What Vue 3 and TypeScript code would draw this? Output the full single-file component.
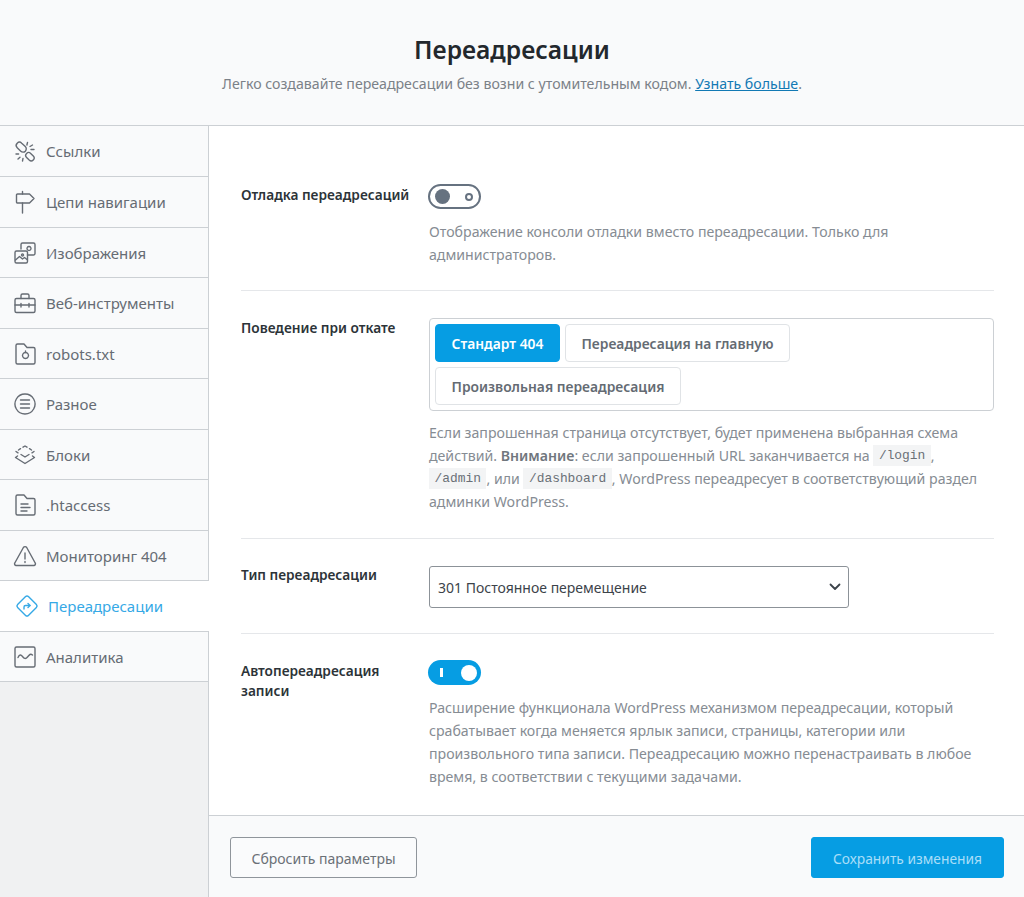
<script setup lang="ts">
interface NavItem { label: string; paths: string[] }
const items: NavItem[] = [
  { label: 'Ссылки', paths: ['M4.2 4.2a3.2 3.2 0 0 1 4.5 0l3.6 3.4a3.2 3.2 0 0 1-4.5 4.6L4.2 8.7a3.2 3.2 0 0 1 0-4.5z', 'M13.6 14.4a2.9 2.9 0 0 1 4.1 0l2.6 2.6a2.9 2.9 0 0 1-4.1 4.1l-2.6-2.6a2.9 2.9 0 0 1 0-4.1z', 'M14.5 3.5l-.6 2.5M19.5 6l-2.5 1.5M21 10.5h-3', 'M3 15h2.6M5 20l2-1.8M9.5 22l.5-2.6'] },
  { label: 'Цепи навигации', paths: ['M4.5 4h12l4.5 4.5-4.5 4.5h-12a1 1 0 0 1-1-1V5a1 1 0 0 1 1-1z', 'M9.5 1.5V4M9.5 13v10'] },
  { label: 'Изображения', paths: ['M3.5 10h9.5a1.5 1.5 0 0 1 1.5 1.5v9a1.5 1.5 0 0 1-1.5 1.5H3.5A1.5 1.5 0 0 1 2 20.5v-9A1.5 1.5 0 0 1 3.5 10z', 'M2.5 19l4-3.5 3 2.5 2-1.5 2.5 2', 'M9.5 13a1 1 0 1 0 .01 0z', 'M8 8V3.5A1.5 1.5 0 0 1 9.5 2h11A1.5 1.5 0 0 1 22 3.5v9a1.5 1.5 0 0 1-1.5 1.5h-6', 'M16 5.5a2 2 0 1 0 .01 0z'] },
  { label: 'Веб-инструменты', paths: ['M3.5 7.5h17A1.5 1.5 0 0 1 22 9v11a1.5 1.5 0 0 1-1.5 1.5h-17A1.5 1.5 0 0 1 2 20V9a1.5 1.5 0 0 1 1.5-1.5z', 'M8 7.5V4.5A1.5 1.5 0 0 1 9.5 3h5A1.5 1.5 0 0 1 16 4.5v3', 'M2 14h20M8 12.5v3.5M16 12.5v3.5'] },
  { label: 'robots.txt', paths: ['M3 3.5A1.5 1.5 0 0 1 4.5 2H11l3 3.5h6.5A1.5 1.5 0 0 1 22 7v13.5a1.5 1.5 0 0 1-1.5 1.5h-16A1.5 1.5 0 0 1 3 20.5z', 'M12.5 10.5a3 3 0 1 0 .01 0z', 'M12.5 9v1.5'] },
  { label: 'Разное', paths: ['M12 2a10 10 0 1 0 .01 0z', 'M7.5 8h9M7.5 12h9M7.5 16h9'] },
  { label: 'Блоки', paths: ['M10 4.2L12 3l2 1.2M16.5 5.7L18.5 7M21 8.5L19 9.8M5 9.8L3 8.5M5.5 7L7.5 5.7', 'M8 11.5l4 2.5 4-2.5', 'M4.5 13L2.5 14.5 12 20.5l9.5-6L19.5 13'] },
  { label: '.htaccess', paths: ['M3 3.5A1.5 1.5 0 0 1 4.5 2H11l3 3.5h6.5A1.5 1.5 0 0 1 22 7v13.5a1.5 1.5 0 0 1-1.5 1.5h-16A1.5 1.5 0 0 1 3 20.5z', 'M8 11h7M8 14.5h9M8 18h6'] },
  { label: 'Мониторинг 404', paths: ['M10.4 3.5a2 2 0 0 1 3.3 0l8.5 15.5a1.6 1.6 0 0 1-1.4 2.5H3.2a1.6 1.6 0 0 1-1.4-2.5z', 'M12 9v6M12 17.5v1'] },
  { label: 'Переадресации', paths: ['M10.6 2.6a2 2 0 0 1 2.8 0l8 8a2 2 0 0 1 0 2.8l-8 8a2 2 0 0 1-2.8 0l-8-8a2 2 0 0 1 0-2.8z', 'M9 15v-2a1.5 1.5 0 0 1 1.5-1.5H15', 'M13 9.5l2 2-2 2'] },
  { label: 'Аналитика', paths: ['M3.5 2h17A1.5 1.5 0 0 1 22 3.5v17a1.5 1.5 0 0 1-1.5 1.5h-17A1.5 1.5 0 0 1 2 20.5v-17A1.5 1.5 0 0 1 3.5 2z', 'M5 12.5c1.5-3.5 3-3 4.5-1s3 3 5 .5 3-3.5 5-2'] },
]
const activeIndex = 9
</script>

<template>
  <div class="page">
    <header class="head">
      <h1>Переадресации</h1>
      <p>Легко создавайте переадресации без возни с утомительным кодом. <a class="link">Узнать больше</a>.</p>
    </header>
    <div class="main">
      <nav class="side">
        <div v-for="(it, i) in items" :key="it.label" class="item" :class="{ active: i === activeIndex }">
          <svg class="ic" viewBox="0 0 24 24" width="24" height="24" fill="none" stroke="currentColor" stroke-width="1.4" stroke-linecap="round" stroke-linejoin="round">
            <path v-for="d in it.paths" :key="d" :d="d" />
          </svg>
          <span>{{ it.label }}</span>
        </div>
      </nav>
      <section class="content">
        <div class="rows">
          <div class="row first">
            <div class="label low">Отладка переадресаций</div>
            <div class="ctl">
              <div class="toggle off"><span class="ring"></span><span class="knob"></span></div>
              <p class="desc">Отображение консоли отладки вместо переадресации. Только для администраторов.</p>
            </div>
          </div>
          <div class="row">
            <div class="label">Поведение при откате</div>
            <div class="ctl">
              <div class="seg">
                <button class="opt on">Стандарт 404</button>
                <button class="opt">Переадресация на главную</button>
                <button class="opt">Произвольная переадресация</button>
              </div>
              <p class="desc gap">Если запрошенная страница отсутствует, будет применена выбранная схема действий. <b>Внимание</b>: если запрошенный URL заканчивается на <code>/login</code>, <code>/admin</code>, или <code>/dashboard</code>, WordPress переадресует в соответствующий раздел админки WordPress.</p>
            </div>
          </div>
          <div class="row">
            <div class="label high">Тип переадресации</div>
            <div class="ctl">
              <div class="select">
                <span>301 Постоянное перемещение</span>
                <svg width="12" height="8" viewBox="0 0 12 8" fill="none" stroke="#3c434a" stroke-width="1.8" stroke-linecap="round" stroke-linejoin="round"><path d="M1.5 1.5L6 6l4.5-4.5" /></svg>
              </div>
            </div>
          </div>
          <div class="row last">
            <div class="label low">Автопереадресация записи</div>
            <div class="ctl">
              <div class="toggle on"><span class="bar"></span><span class="knob"></span></div>
              <p class="desc">Расширение функционала WordPress механизмом переадресации, который срабатывает когда меняется ярлык записи, страницы, категории или произвольного типа записи. Переадресацию можно перенастраивать в любое время, в соответствии с текущими задачами.</p>
            </div>
          </div>
        </div>
        <footer class="foot">
          <button class="reset">Сбросить параметры</button>
          <button class="save">Сохранить изменения</button>
        </footer>
      </section>
    </div>
  </div>
</template>

<style>
body { margin: 0; }
</style>

<style scoped>
.page { width: 1024px; height: 897px; overflow: hidden; font-family: "Noto Sans", "Open Sans", sans-serif; font-size: 14px; display: flex; flex-direction: column; background: #fff; color: #2c3338; }
.head { height: 125px; border-bottom: 1px solid #ccd0d4; background: #f9fafb; text-align: center; }
h1 { margin: 0; padding-top: 33px; font-size: 24.6px; line-height: 34px; font-weight: 600; color: #23282d; }
.head p { margin: 7px 0 0; font-size: 14.15px; line-height: 20px; color: #7b8188; }
.link { color: #1279b4; text-decoration: underline; }
.main { display: flex; flex: 1; min-height: 0; }
.side { width: 208px; flex: none; background: #f0f1f2; border-right: 1px solid #ccd0d4; }
.item { position: relative; height: 50.5px; box-sizing: border-box; display: flex; align-items: center; gap: 9px; padding: 1px 0 0 13px; background: #f9fafb; border-bottom: 1px solid #ccd0d4; color: #666c74; font-size: 15px; }
.item:first-child { height: 51px; padding-top: 0; }
.item.active { background: #fff; color: #36a9e6; margin-right: -1px; padding-left: 15px; }
.ic { flex: none; }
.content { flex: 1; min-width: 0; display: flex; flex-direction: column; }
.rows { flex: 1; min-height: 0; padding: 0 30px 0 32px; }
.row { display: grid; grid-template-columns: 188px 1fr; padding: 27px 0 25px; border-bottom: 1px solid #e5e7ea; }
.row.first { padding-top: 58px; padding-bottom: 24px; }
.row.last { border-bottom: 0; padding-top: 26px; }
.label { font-weight: 600; font-size: 13.7px; line-height: 20px; color: #2c3338; padding-right: 10px; }
.label.low { padding-top: 1px; }
.label.high { margin-top: -1px; }
.desc { margin: 11px 0 0; padding-right: 10px; font-size: 14.15px; line-height: 23px; color: #868c93; }
.desc.gap { margin-top: 10px; }
.desc b { font-weight: 600; color: #70767d; }
code { display: inline-block; font-family: "Liberation Mono", "DejaVu Sans Mono", monospace; font-size: 12.9px; line-height: 15px; vertical-align: top; margin-top: 1px; background: #f3f4f5; padding: 3px 5.5px; color: #6a7077; }
.toggle { position: relative; width: 53px; height: 25px; margin-left: -1px; box-sizing: border-box; border-radius: 13px; }
.toggle.off { border: 2px solid #667280; background: #fff; }
.toggle.off .knob { position: absolute; left: 5px; top: 3px; width: 15px; height: 15px; border-radius: 50%; background: #667280; }
.ring { position: absolute; right: 6px; top: 6.5px; width: 8px; height: 8px; box-sizing: border-box; border: 2px solid #667280; border-radius: 50%; }
.toggle.on { background: #069de3; }
.toggle.on .knob { position: absolute; right: 4px; top: 4.5px; width: 16px; height: 16px; border-radius: 50%; background: #fff; }
.bar { position: absolute; left: 12px; top: 8px; width: 3px; height: 9px; background: #fff; }
.seg { display: flex; flex-wrap: wrap; gap: 5px; padding: 5px; height: 93px; box-sizing: border-box; border: 1px solid #ccd0d4; border-radius: 4px; align-content: flex-start; }
.opt { height: 38px; padding: 0 15.5px; border: 1px solid #e0e3e6; border-radius: 4px; background: #fff; font: 600 13.85px "Noto Sans", sans-serif; color: #646b73; }
.opt.on { background: #069de3; border-color: #069de3; color: #fff; }
.select { width: 420px; height: 42px; box-sizing: border-box; display: flex; align-items: center; justify-content: space-between; padding: 0 7px 0 8px; border: 1px solid #8c9298; border-radius: 3px; color: #3c434a; font-size: 14px; }
.foot { height: 82px; flex: none; box-sizing: border-box; display: flex; justify-content: space-between; align-items: flex-start; padding: 21px 20px 0 21px; background: #f9fafb; border-top: 1px solid #ccd0d4; }
.foot button { height: 41px; padding: 2px 0 0; border-radius: 3px; font: 400 14px "Noto Sans", sans-serif; }
.reset { width: 187px; background: #fafbfc; border: 1px solid #8f959b; color: #6a7077; }
.foot .save { width: 193px; background: #069de3; border: 1px solid #069de3; color: #a9def8; font-size: 13.8px; }
</style>
